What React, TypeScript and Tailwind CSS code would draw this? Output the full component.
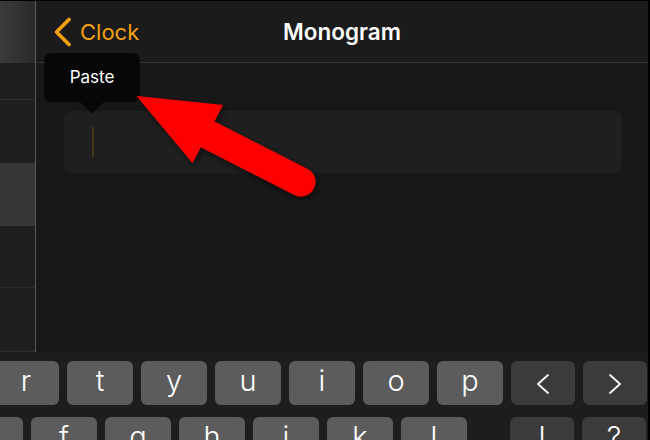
import React from "react";

const row1 = ["r", "t", "y", "u", "i", "o", "p"];
const row2 = ["d", "f", "g", "h", "j", "k", "l"];

function Key({ label, dark, wide }: { label: React.ReactNode; dark?: boolean; wide?: boolean }) {
  return (
    <div
      className={`${wide ? "w-[64px]" : "w-[66px]"} h-[44px] shrink-0 rounded-[6px] flex justify-center items-start pt-[5px] text-white text-[29px] font-light leading-[29px] ${
        dark ? "bg-[#3b3b3b]" : "bg-[#5c5c5c]"
      }`}
    >
      {label}
    </div>
  );
}

function Chevron({ dir }: { dir: "l" | "r" }) {
  return (
    <svg width="14" height="20" viewBox="0 0 14 20" className="mt-[8px]">
      <polyline
        points={dir === "l" ? "12,1 2,10 12,19" : "2,1 12,10 2,19"}
        fill="none"
        stroke="white"
        strokeWidth="1.8"
        strokeLinecap="round"
        strokeLinejoin="round"
      />
    </svg>
  );
}

export default function App() {
  return (
    <div
      className="relative w-[650px] h-[440px] overflow-hidden bg-[#1d1d1d] border-t border-black border-r-2 flex flex-col"
      style={{ fontFamily: "Inter, 'Liberation Sans', sans-serif" }}
    >
      <div className="flex h-[351px] shrink-0">
        {/* sidebar */}
        <div className="w-[35px] flex flex-col border-b border-[#2e2e2e]">
          <div className="h-[62px] bg-gradient-to-r from-[#3b3b3b] to-[#2a2a2a]" />
          <div className="h-[37px] bg-[#1e1e1e] border-b border-[#2c2c2c]" />
          <div className="h-[63px] bg-[#1e1e1e]" />
          <div className="h-[63px] bg-[#363636]" />
          <div className="h-[62px] bg-[#1e1e1e] border-b border-[#2c2c2c]" />
          <div className="flex-1 bg-[#1e1e1e]" />
        </div>
        <div className="w-px bg-[#5a5a5a]" />
        {/* main */}
        <div className="flex-1 flex flex-col bg-[#181818]">
          <div className="h-[62px] shrink-0 bg-[#1b1b1b] border-b border-[#333333] relative flex items-center justify-center">
            <div className="absolute left-[17px] top-[16px] flex items-center gap-[8px] text-[#f5a00f]">
              <svg width="19" height="30" viewBox="0 0 19 30">
                <polyline
                  points="16,2.5 3.5,15 16,27.5"
                  fill="none"
                  stroke="#f5a00f"
                  strokeWidth="3.6"
                  strokeLinecap="round"
                  strokeLinejoin="round"
                />
              </svg>
              <span className="text-[22px] leading-[30px]">Clock</span>
            </div>
            <span className="text-white text-[22.5px] font-semibold mt-[1px]">Monogram</span>
          </div>
          <div className="pt-[48px] pl-[28px] pr-[26px]">
            <div className="h-[62px] rounded-[7px] bg-[#1f1f1f] pl-[28px] pt-[16px]">
              <div className="w-[2px] h-[30px] bg-[#45351c]" />
            </div>
          </div>
        </div>
      </div>

      {/* keyboard */}
      <div className="flex-1 pt-[9px] flex flex-col gap-[12px]">
        <div className="flex gap-[8px] ml-[-7px]">
          {row1.map((k) => (
            <Key key={k} label={k} />
          ))}
          <Key wide dark label={<Chevron dir="l" />} />
          <Key wide dark label={<Chevron dir="r" />} />
        </div>
        <div className="flex gap-[8px] ml-[-43px]">
          {row2.map((k) => (
            <Key key={k} label={k} />
          ))}
          <div className="w-[27px]" />
          <Key wide dark label="!" />
          <Key wide dark label="?" />
        </div>
      </div>

      {/* Paste tooltip */}
      <div className="absolute left-[44px] top-[52px] flex flex-col items-center">
        <div className="w-[96px] h-[49px] rounded-[7px] bg-[#070707] flex items-center justify-center text-white text-[17px]">
          Paste
        </div>
        <div className="w-0 h-0 border-l-[12px] border-r-[12px] border-t-[12px] border-l-transparent border-r-transparent border-t-[#070707]" />
      </div>

      {/* red arrow */}
      <svg className="absolute left-0 top-0" width="650" height="440" viewBox="0 0 650 440">
        <defs>
          <filter id="sh" x="-20%" y="-20%" width="140%" height="140%">
            <feDropShadow dx="2" dy="3" stdDeviation="3" floodColor="#000" floodOpacity="0.6" />
          </filter>
        </defs>
        <g filter="url(#sh)" fill="#ff0000">
          <line x1="205" y1="132" x2="301" y2="181" stroke="#ff0000" strokeWidth="29" strokeLinecap="round" />
          <polygon points="136.5,95 223,104 192.5,162" />
        </g>
      </svg>
    </div>
  );
}
